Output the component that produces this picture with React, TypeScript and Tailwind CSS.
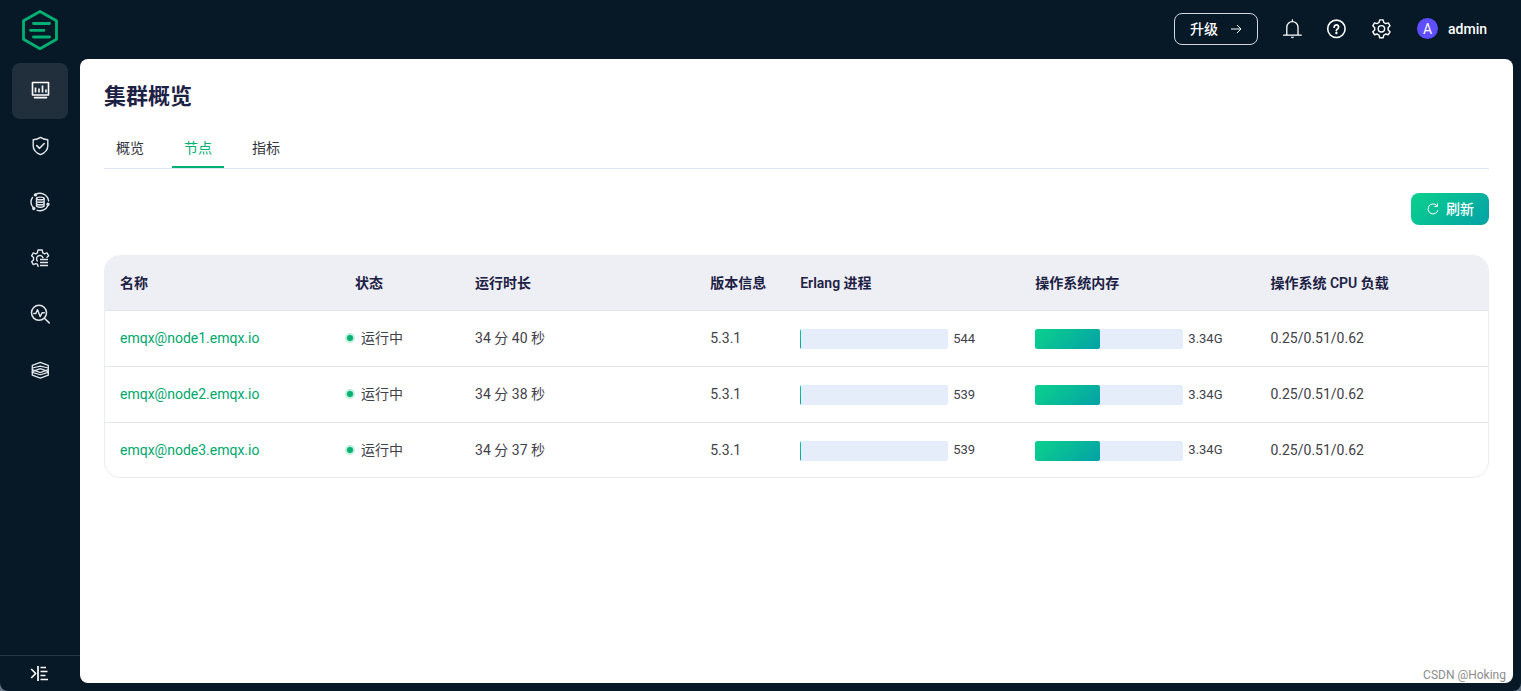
import type { ReactNode } from "react";

type NodeInfo = {
    name: string;
    uptime: string;
    version: string;
    processes: number;
    processPercent: number;
    memory: string;
    memoryPercent: number;
    load: string;
};

const nodes: NodeInfo[] = [
    { name: "emqx@node1.emqx.io", uptime: "34 分 40 秒", version: "5.3.1", processes: 544, processPercent: 0.6, memory: "3.34G", memoryPercent: 44, load: "0.25/0.51/0.62" },
    { name: "emqx@node2.emqx.io", uptime: "34 分 38 秒", version: "5.3.1", processes: 539, processPercent: 0.6, memory: "3.34G", memoryPercent: 44, load: "0.25/0.51/0.62" },
    { name: "emqx@node3.emqx.io", uptime: "34 分 37 秒", version: "5.3.1", processes: 539, processPercent: 0.6, memory: "3.34G", memoryPercent: 44, load: "0.25/0.51/0.62" },
];

const tabs = ["概览", "节点", "指标"];

function Icon({ children, className = "size-5" }: { children: ReactNode; className?: string }) {
    return (
        <svg
            viewBox="0 0 20 20"
            className={className}
            fill="none"
            stroke="currentColor"
            strokeWidth="1.4"
            strokeLinecap="round"
            strokeLinejoin="round"
            aria-hidden="true"
        >
            {children}
        </svg>
    );
}

function Logo() {
    return (
        <svg viewBox="0 0 36 40" className="h-10 w-9" fill="none" stroke="#00b173" strokeLinecap="round" strokeLinejoin="round" aria-hidden="true">
            <path d="M18 1.500 34.500 10.800V29.200L18 38.700 1.500 29.200V10.800Z" strokeWidth="2.800" />
            <path d="M11.500 13.500H27.500M8.500 20.300H22M11.500 27H27.500" strokeWidth="2.800" />
        </svg>
    );
}

const menus = [
    {
        label: "监控",
        icon: (
            <Icon>
                <path d="M2.500 2.500h16v12.500h-16z" strokeWidth="1.600" />
                <path d="M5.500 7.500v5M9 8.500v4M12.500 5.500v7M16 9.500v3" strokeWidth="1.600" strokeLinecap="butt" />
                <path d="M4.500 17.600h12" strokeWidth="1.600" />
            </Icon>
        ),
    },
    {
        label: "访问控制",
        icon: (
            <Icon>
                <path d="M10.500 1.400C8.300 3 5.800 3.600 3.200 3.800v6.100c0 4 2.900 6.800 7.300 8.700 4.400-1.900 7.300-4.700 7.300-8.700V3.800c-2.600-.2-5.100-.8-7.300-2.400Z" />
                <path d="m6.800 9.600 2.800 2.700 4.600-4.800" strokeWidth="1.600" />
            </Icon>
        ),
    },
    {
        label: "集成",
        icon: (
            <Icon>
                <path d="M5.300 2.600A8.800 8.800 0 0 1 18.600 8.800M18.100 13.200A8.800 8.800 0 0 1 7.200 18.300M3.300 15.800A8.800 8.800 0 0 1 2.500 5.400" />
                <ellipse cx="10.300" cy="6.400" rx="3.800" ry="1.300" />
                <path d="M6.500 6.400v7.400c0 .8 1.700 1.400 3.800 1.400s3.800-.6 3.800-1.400V6.400M6.500 8.900c0 .8 1.700 1.400 3.800 1.400s3.800-.6 3.800-1.400M6.500 11.400c0 .8 1.700 1.400 3.800 1.400s3.800-.6 3.800-1.400" />
                <circle cx="5.400" cy="2.900" r="1" fill="currentColor" />
                <circle cx="18" cy="12.300" r="1" fill="currentColor" />
                <circle cx="3.800" cy="16.500" r="1" fill="currentColor" />
            </Icon>
        ),
    },
    {
        label: "管理",
        icon: (
            <Icon>
                <path d="M8.200 18.400 7.400 16.200l-1.600-.6-2.500 1-1.700-2.900 1.900-1.700V9.600L1.600 7.800l1.700-2.900 2.500.9 1.600-1L8 2h4.200l.6 2.800 1.700 1 2.500-.9 1.700 2.900-1.700 1.500" />
                <path d="M7.400 13a3.300 3.300 0 1 1 5.600-3.200" />
                <path d="M10 11.500h8M10 14.500h8M10 17.500h8" strokeWidth="1.600" strokeLinecap="butt" />
            </Icon>
        ),
    },
    {
        label: "问题分析",
        icon: (
            <Icon>
                <circle cx="9" cy="8.800" r="7.500" strokeWidth="1.500" />
                <path d="m14.400 14.200 4.800 4.700" strokeWidth="1.500" />
                <path d="M3.800 9.500h2.100l1.600-3.900 2.600 7 2-3.800h2.200" />
            </Icon>
        ),
    },
    {
        label: "系统设置",
        icon: (
            <Icon>
                <path d="m10.300 2.400 8 3v4.200l-8 3-8-3V5.400l8-3Z" strokeWidth="1.300" />
                <path d="m10.300 8.600 8 3v3.600l-8 3-8-3v-3.600l8-3Z" strokeWidth="1.300" />
                <path d="m2.300 8 8-1.800 8 1.800M2.300 12.400l8 2.400 8-2.400M2.300 9.600v2M18.300 9.600v2" strokeWidth="1.200" />
            </Icon>
        ),
    },
];

function Header() {
    return (
        <header className="flex h-[59px] items-center justify-between pr-[34px] pl-[22px]">
            <a href="#" aria-label="EMQX">
                <Logo />
            </a>
            <div className="flex items-center pb-0.5">
                <button className="flex h-8 items-center gap-3 rounded-lg border border-[#d5d8dc] px-[15px] text-sm font-medium">
                    升级
                    <svg viewBox="0 0 12 12" className="size-3" fill="none" stroke="currentColor" strokeWidth="1" aria-hidden="true">
                        <path d="M1 6h10M7 2l4 4-4 4" />
                    </svg>
                </button>
                <button aria-label="通知" className="ml-6">
                    <Icon>
                        <path d="M4.800 16V8.200a5.600 5.600 0 0 1 11.200 0V16M1.600 16.200h17.600M10.400 1v1.400" strokeWidth="1.300" />
                        <path d="M9.200 18.400a1.400 1.200 0 0 0 2.400 0Z" fill="currentColor" strokeWidth="0.600" />
                    </Icon>
                </button>
                <button aria-label="帮助" className="ml-6">
                    <Icon>
                        <circle cx="10.400" cy="9.800" r="8.700" strokeWidth="1.600" />
                        <path d="M8.200 8.100a2.200 2.200 0 1 1 3.500 1.700c-.8.500-1.300.8-1.300 1.700" strokeWidth="1.800" />
                        <circle cx="10.400" cy="14" r=".5" fill="currentColor" />
                    </Icon>
                </button>
                <button aria-label="设置" className="ml-[25px]">
                    <Icon>
                        <path d="M8.700.9h3.400l.7 2.600 1.900 1.100 2.600-.7 1.700 2.900-1.900 1.900v2.200l1.900 1.900-1.700 2.900-2.600-.7-1.900 1.100-.7 2.600H8.700L8 16.100 6.100 15l-2.600.7-1.700-2.900 1.900-1.900V8.700L1.800 6.800l1.700-2.900 2.600.7L8 3.500Z" />
                        <circle cx="10.400" cy="9.800" r="3.200" />
                    </Icon>
                </button>
                <button className="ml-[26px] flex items-center gap-[10px] text-sm">
                    <span className="flex size-[21px] items-center justify-center rounded-full bg-[#5e4eff]">A</span>
                    <span className="font-medium">admin</span>
                </button>
            </div>
        </header>
    );
}

function Sidebar() {
    return (
        <aside className="flex w-20 shrink-0 flex-col justify-between text-[#e3e6ea]">
            <nav className="flex flex-col items-center pt-1">
                {menus.map((menu, index) => (
                    <a
                        key={menu.label}
                        href="#"
                        aria-label={menu.label}
                        className={`flex size-14 items-center justify-center rounded-lg pb-0.5 ${index === 0 ? "bg-[#212f3c] text-white" : ""}`}
                    >
                        {menu.icon}
                    </a>
                ))}
            </nav>
            <button aria-label="展开菜单" className="flex h-9 items-center justify-center border-t border-[#2a3744] text-white">
                <Icon>
                    <path d="m1.200 5 4.500 4.500-4.500 4.500M8 2v15" strokeLinecap="butt" strokeWidth="1.700" />
                    <path d="M10.500 3.500h5.500M10.500 7.500h7M10.500 11.500h5M10.500 15.500h7.500" strokeLinecap="butt" strokeWidth="1.500" />
                </Icon>
            </button>
        </aside>
    );
}

function Bar({ percent, label }: { percent: number; label: string | number }) {
    return (
        <div className="flex items-center gap-[5px] pt-0.5 text-[13px]">
            <div className="h-5 w-[148px] overflow-hidden rounded-xs bg-[#e6edfa]">
                <div className="h-full rounded-xs bg-linear-[135deg] from-[#0bd18c] to-[#04a1a6]" style={{ width: `${percent}%` }} />
            </div>
            <span>{label}</span>
        </div>
    );
}

function NodeTable() {
    return (
        <div className="mt-[30px] overflow-hidden rounded-2xl border border-[#ececf4]">
            <table className="w-full table-fixed text-left text-sm text-[#3f4149]">
                <colgroup>
                    <col className="w-[17%]" />
                    <col className="w-[120px]" />
                    <col className="w-[17%]" />
                    <col className="w-[90px]" />
                    <col className="w-[17%]" />
                    <col className="w-[17%]" />
                    <col />
                </colgroup>
                <thead className="bg-[#eeeff5] text-[#1d2144]">
                    <tr className="h-[54px] border-b border-[#e1e5ef]">
                        <th className="px-[15px] font-semibold">名称</th>
                        <th className="px-[15px] font-semibold">状态</th>
                        <th className="px-[15px] font-semibold">运行时长</th>
                        <th className="px-[15px] font-semibold">版本信息</th>
                        <th className="px-[15px] font-semibold">Erlang 进程</th>
                        <th className="px-[15px] font-semibold">操作系统内存</th>
                        <th className="px-[15px] font-semibold">操作系统 CPU 负载</th>
                    </tr>
                </thead>
                <tbody>
                    {nodes.map((node) => (
                        <tr key={node.name} className="h-14 border-b border-[#e4e7ef] last:h-[55px] last:border-b-0">
                            <td className="px-[15px]">
                                <a href="#" className="text-[#00a86b]">
                                    {node.name}
                                </a>
                            </td>
                            <td className="px-[5px]">
                                <div className="flex items-center gap-[6px]">
                                    <span className="flex size-[10px] items-center justify-center rounded-full bg-[#bdeedd]">
                                        <span className="size-[6px] rounded-full bg-[#00b173]" />
                                    </span>
                                    运行中
                                </div>
                            </td>
                            <td className="px-[15px]">{node.uptime}</td>
                            <td className="px-[15px]">{node.version}</td>
                            <td className="px-[15px]">
                                <Bar percent={node.processPercent} label={node.processes} />
                            </td>
                            <td className="px-[15px]">
                                <Bar percent={node.memoryPercent} label={node.memory} />
                            </td>
                            <td className="px-[15px]">{node.load}</td>
                        </tr>
                    ))}
                </tbody>
            </table>
        </div>
    );
}

export default function App() {
    return (
        <div className="bg-[#657384] font-[Roboto,'Noto_Sans_CJK_SC',sans-serif]">
            <div className="flex min-h-screen flex-col rounded-b-lg bg-[#071926] text-white">
                <Header />
                <div className="flex flex-1">
                    <Sidebar />
                    <main className="relative mr-2 mb-2 min-w-0 flex-1 rounded-lg bg-white px-6 pt-5">
                        <h1 className="text-[22px] leading-9 font-bold text-[#1d2144]">集群概览</h1>
                        <div role="tablist" className="mt-[14px] flex gap-4 border-b border-[#e1e5ef] text-sm text-[#33353d]">
                            {tabs.map((tab) => (
                                <button
                                    key={tab}
                                    role="tab"
                                    aria-selected={tab === "节点"}
                                    className={`h-[39px] border-b-2 px-3 ${tab === "节点" ? "border-[#00b173] text-[#00b173]" : "border-transparent"}`}
                                >
                                    {tab}
                                </button>
                            ))}
                        </div>
                        <div className="mt-6 flex justify-end">
                            <button className="flex h-8 items-center gap-[6px] rounded-lg bg-linear-[135deg] from-[#0bd18c] to-[#04a1a6] px-[15px] text-sm font-medium text-white">
                                <svg viewBox="0 0 14 14" className="size-[14px]" fill="none" stroke="currentColor" strokeWidth="1" aria-hidden="true">
                                    <path d="M11.900 8.200A5 5 0 1 1 10.800 3.600M11.500 1.500v3H8.500" />
                                </svg>
                                刷新
                            </button>
                        </div>
                        <NodeTable />
                        <span className="absolute right-[7px] bottom-0 font-[Roboto,sans-serif] text-xs text-[#8c8c8c]">CSDN @Hoking</span>
                    </main>
                </div>
            </div>
        </div>
    );
}
